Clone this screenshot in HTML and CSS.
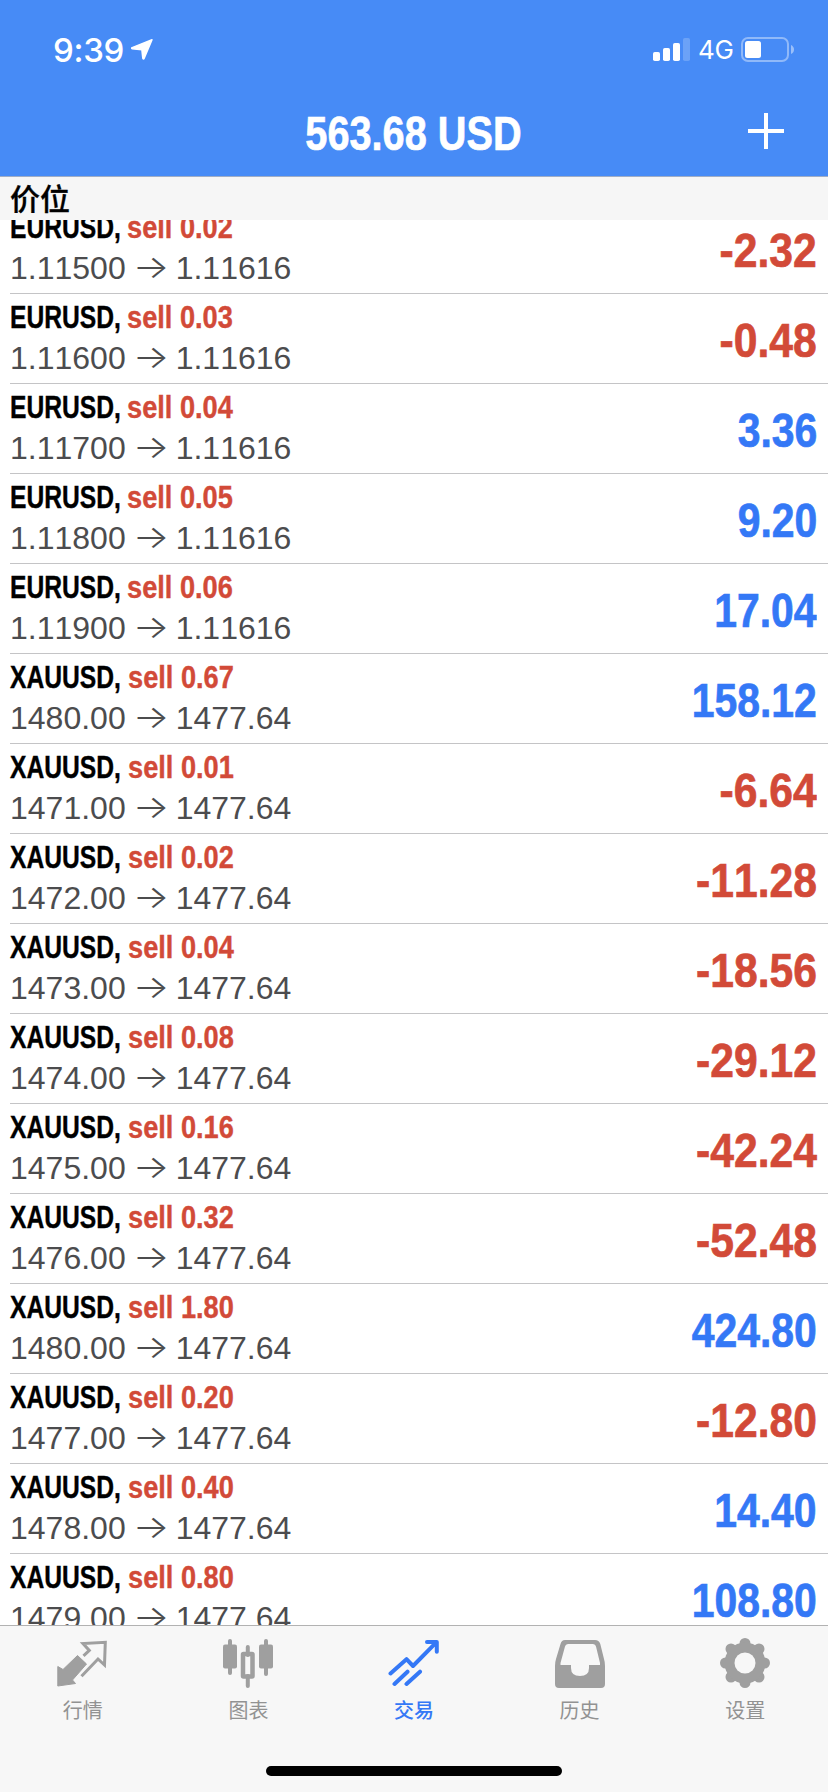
FILE: index.html
```html
<!DOCTYPE html>
<html lang="zh-CN">
<head>
<meta charset="utf-8">
<title>交易</title>
<link rel="stylesheet" href="styles.css">
</head>
<body>
<div class="app">
<header class="header">
  <div class="status">
    <span class="time">9:39</span>
    <svg class="location" width="22" height="21" viewBox="0 0 22 21"><path d="M21 .8 13.2 19.2q-.7 1.5-1.400 0L10.900 10.800 1.200 9.800q-1.400-.6 0-1.200Z" fill="#fff" stroke="#fff" stroke-width="1.500" stroke-linejoin="round"/></svg>
    <svg class="signal" width="38" height="24" viewBox="0 0 38 24" fill="#fff"><rect x="0" y="14" width="7" height="9" rx="1.8"/><rect x="10" y="10" width="7" height="13" rx="1.8"/><rect x="20" y="5" width="7" height="18" rx="1.8"/><rect x="30" y="0" width="7" height="23" rx="1.8" opacity=".2"/></svg>
    <span class="network">4G</span>
    <svg class="battery" width="54" height="26" viewBox="0 0 54 26"><rect x="1" y="1" width="46" height="23" rx="6" fill="none" stroke="#fff" stroke-opacity=".4" stroke-width="2"/><rect x="4" y="4" width="16" height="17" rx="2.5" fill="#fff"/><path d="M50 8q3 1.5 3 4.500t-3 4.500Z" fill="#fff" opacity=".45"/></svg>
  </div>
  <div class="nav">
    <h1 class="balance">563.68 USD</h1>
    <svg class="add" width="36" height="36" viewBox="0 0 36 36"><path d="M18 0v36M0 18h36" stroke="#fff" stroke-width="4"/></svg>
  </div>
</header>
<h2 class="section">价位</h2>
<main class="list">
  <div class="row"><div class="info"><div class="deal"><span class="symbol">EURUSD,</span><span class="side">sell 0.02</span></div><div class="price"><span>1.11500</span><span class="arrow">→</span><span>1.11616</span></div></div><div class="profit loss">-2.32</div></div>
  <div class="row"><div class="info"><div class="deal"><span class="symbol">EURUSD,</span><span class="side">sell 0.03</span></div><div class="price"><span>1.11600</span><span class="arrow">→</span><span>1.11616</span></div></div><div class="profit loss">-0.48</div></div>
  <div class="row"><div class="info"><div class="deal"><span class="symbol">EURUSD,</span><span class="side">sell 0.04</span></div><div class="price"><span>1.11700</span><span class="arrow">→</span><span>1.11616</span></div></div><div class="profit">3.36</div></div>
  <div class="row"><div class="info"><div class="deal"><span class="symbol">EURUSD,</span><span class="side">sell 0.05</span></div><div class="price"><span>1.11800</span><span class="arrow">→</span><span>1.11616</span></div></div><div class="profit">9.20</div></div>
  <div class="row"><div class="info"><div class="deal"><span class="symbol">EURUSD,</span><span class="side">sell 0.06</span></div><div class="price"><span>1.11900</span><span class="arrow">→</span><span>1.11616</span></div></div><div class="profit">17.04</div></div>
  <div class="row"><div class="info"><div class="deal"><span class="symbol gold">XAUUSD,</span><span class="side">sell 0.67</span></div><div class="price"><span>1480.00</span><span class="arrow">→</span><span>1477.64</span></div></div><div class="profit">158.12</div></div>
  <div class="row"><div class="info"><div class="deal"><span class="symbol gold">XAUUSD,</span><span class="side">sell 0.01</span></div><div class="price"><span>1471.00</span><span class="arrow">→</span><span>1477.64</span></div></div><div class="profit loss">-6.64</div></div>
  <div class="row"><div class="info"><div class="deal"><span class="symbol gold">XAUUSD,</span><span class="side">sell 0.02</span></div><div class="price"><span>1472.00</span><span class="arrow">→</span><span>1477.64</span></div></div><div class="profit loss">-11.28</div></div>
  <div class="row"><div class="info"><div class="deal"><span class="symbol gold">XAUUSD,</span><span class="side">sell 0.04</span></div><div class="price"><span>1473.00</span><span class="arrow">→</span><span>1477.64</span></div></div><div class="profit loss">-18.56</div></div>
  <div class="row"><div class="info"><div class="deal"><span class="symbol gold">XAUUSD,</span><span class="side">sell 0.08</span></div><div class="price"><span>1474.00</span><span class="arrow">→</span><span>1477.64</span></div></div><div class="profit loss">-29.12</div></div>
  <div class="row"><div class="info"><div class="deal"><span class="symbol gold">XAUUSD,</span><span class="side">sell 0.16</span></div><div class="price"><span>1475.00</span><span class="arrow">→</span><span>1477.64</span></div></div><div class="profit loss">-42.24</div></div>
  <div class="row"><div class="info"><div class="deal"><span class="symbol gold">XAUUSD,</span><span class="side">sell 0.32</span></div><div class="price"><span>1476.00</span><span class="arrow">→</span><span>1477.64</span></div></div><div class="profit loss">-52.48</div></div>
  <div class="row"><div class="info"><div class="deal"><span class="symbol gold">XAUUSD,</span><span class="side">sell 1.80</span></div><div class="price"><span>1480.00</span><span class="arrow">→</span><span>1477.64</span></div></div><div class="profit">424.80</div></div>
  <div class="row"><div class="info"><div class="deal"><span class="symbol gold">XAUUSD,</span><span class="side">sell 0.20</span></div><div class="price"><span>1477.00</span><span class="arrow">→</span><span>1477.64</span></div></div><div class="profit loss">-12.80</div></div>
  <div class="row"><div class="info"><div class="deal"><span class="symbol gold">XAUUSD,</span><span class="side">sell 0.40</span></div><div class="price"><span>1478.00</span><span class="arrow">→</span><span>1477.64</span></div></div><div class="profit">14.40</div></div>
  <div class="row"><div class="info"><div class="deal"><span class="symbol gold">XAUUSD,</span><span class="side">sell 0.80</span></div><div class="price"><span>1479.00</span><span class="arrow">→</span><span>1477.64</span></div></div><div class="profit">108.80</div></div>
</main>
<footer class="footer">
  <nav class="tabs">
    <a class="tab"><svg width="52" height="52" viewBox="0 0 52 52"><path d="M.8 29.500 6 32.500 20.500 18.500 29.500 27 15.500 43 18.500 46.500.8 49Z" fill="#9f9f9f" stroke="#9f9f9f" stroke-width="1" stroke-linejoin="round"/><path d="M26.500 18.800 32.300 13.400 26 6.600 48.300 5.300 47.500 28 41 22 24.500 39.300" fill="none" stroke="#9f9f9f" stroke-width="3"/></svg><span>行情</span></a>
    <a class="tab"><svg width="52" height="52" viewBox="0 0 52 52" fill="#9f9f9f"><rect x="6" y="2" width="4" height="36" rx="2"/><rect x="1" y="7.500" width="14" height="24" rx="2"/><rect x="42" y="2" width="4" height="37" rx="2"/><rect x="37" y="7.500" width="14" height="24" rx="2"/><path d="M25.800 10v8M25.800 39v10" stroke="#9f9f9f" stroke-width="4" stroke-linecap="round"/><rect x="21" y="17" width="9.500" height="22.500" rx=".5" fill="none" stroke="#9f9f9f" stroke-width="4.500"/></svg><span>图表</span></a>
    <a class="tab active"><svg width="52" height="52" viewBox="0 0 52 52" fill="none" stroke="#3478f6" stroke-width="4" stroke-linecap="round" stroke-linejoin="round"><path d="M2.500 36.500 18.500 22.200 25 29 48.500 5.200M39 5h9.800v9.700M6.500 47 19.500 34.700M18.500 47 32 34.700"/></svg><span>交易</span></a>
    <a class="tab"><svg width="52" height="52" viewBox="0 0 52 52"><path fill="#9f9f9f" fill-rule="evenodd" d="M11 3H41Q45 3 46.300 7L50 22Q51 25 51 29V47Q51 51 47 51H5Q1 51 1 47V29Q1 25 2 22L6.500 7Q7.500 3 11 3ZM14 7Q11.500 7 11 9.500L6.500 26V28H17V31Q17 39 26 39T35 31V28H46V26L42 9.500Q41.500 7 39 7Z"/></svg><span>历史</span></a>
    <a class="tab"><svg width="52" height="52" viewBox="0 0 52 52"><g stroke="#9f9f9f" stroke-linecap="round" stroke-width="11"><path d="M26 6.500v39M6.500 26h39M12 12l28 28M40 12 12 40"/></g><circle cx="26" cy="26" r="20.500" fill="#9f9f9f"/><circle cx="26" cy="26" r="10.500" fill="#f7f7f7"/></svg><span>设置</span></a>
  </nav>
  <div class="home"></div>
</footer>
</div>
</body>
</html>
```
FILE: styles.css
```css
* { box-sizing: border-box; margin: 0; padding: 0; }
body { background: #fff; font-family: "Liberation Sans", "Noto Sans CJK SC", sans-serif; font-kerning: none; }
.app { width: 828px; height: 1792px; display: flex; flex-direction: column; overflow: hidden; }

.header { height: 177px; flex: none; background: #478bf6; color: #fff; border-bottom: 1px solid #9fadc6; }
.status { height: 88px; padding: 12px 33px 0 53px; display: flex; align-items: center; }
.time { font: 500 33px/40px Inter, sans-serif; width: 78px; letter-spacing: -.3px; }
.location { margin-top: -1px; }
.signal { margin-left: auto; }
.network { width: 43px; margin-left: 7px; font: 400 26px/32px Inter, sans-serif; letter-spacing: -.3px; }
.battery { flex: none; }
.nav { height: 86px; display: grid; grid-template-columns: 1fr auto 1fr; align-items: center; padding-right: 44px; padding-left: 42px; }
.balance { grid-column: 2; font-size: 49px; line-height: 56px; white-space: nowrap; margin-top: 4px; transform: scaleX(.81); -webkit-text-stroke: .7px; }
.add { justify-self: end; }

.section { flex: none; height: 43px; background: #f6f6f6; padding-left: 10px; font: 500 30px/41px "Noto Sans CJK SC", sans-serif; -webkit-text-stroke: .3px; }
.list { flex: 1; min-height: 0; overflow: hidden; display: flex; flex-direction: column; justify-content: flex-end; margin-bottom: -19px; }
.row { flex: none; height: 90px; margin-left: 10px; padding-right: 11px; display: flex; justify-content: space-between; border-bottom: 1px solid #c4c4c6; }
.deal { display: flex; height: 43px; padding-top: 5px; font-size: 32px; line-height: 36px; font-weight: bold; white-space: nowrap; -webkit-text-stroke: .4px; }
.symbol { width: 117px; transform: scaleX(.77); transform-origin: 0 0; }
.gold { width: 118px; }
.side { color: #d24a38; transform: scaleX(.85); transform-origin: 0 0; }
.price { display: flex; height: 42px; color: #4c4c4e; font-size: 32px; line-height: 42px; }
.arrow { width: 50px; text-align: center; font: 300 32px/40px Inter, sans-serif; transform: scaleX(1.2); }
.profit { color: #3478f6; font-size: 49px; line-height: 92px; font-weight: bold; transform: scaleX(.835); transform-origin: 100% 0; white-space: nowrap; -webkit-text-stroke: .7px; }
.loss { color: #d24a38; transform: scaleX(.87); }

.footer { position: relative; flex: none; height: 167px; background: #f7f7f7; border-top: 1px solid #b2b2b2; }
.tabs { display: grid; grid-template-columns: repeat(5, 1fr); padding-top: 11px; }
.tab { display: flex; flex-direction: column; align-items: center; color: #929292; font: 400 20px/30px "Noto Sans CJK SC", sans-serif; }
.tab span { margin-top: 6px; }
.active { color: #3478f6; font-weight: 500; }
.home { width: 296px; height: 10px; border-radius: 5px; background: #000; margin: 41px auto 0; }
```
